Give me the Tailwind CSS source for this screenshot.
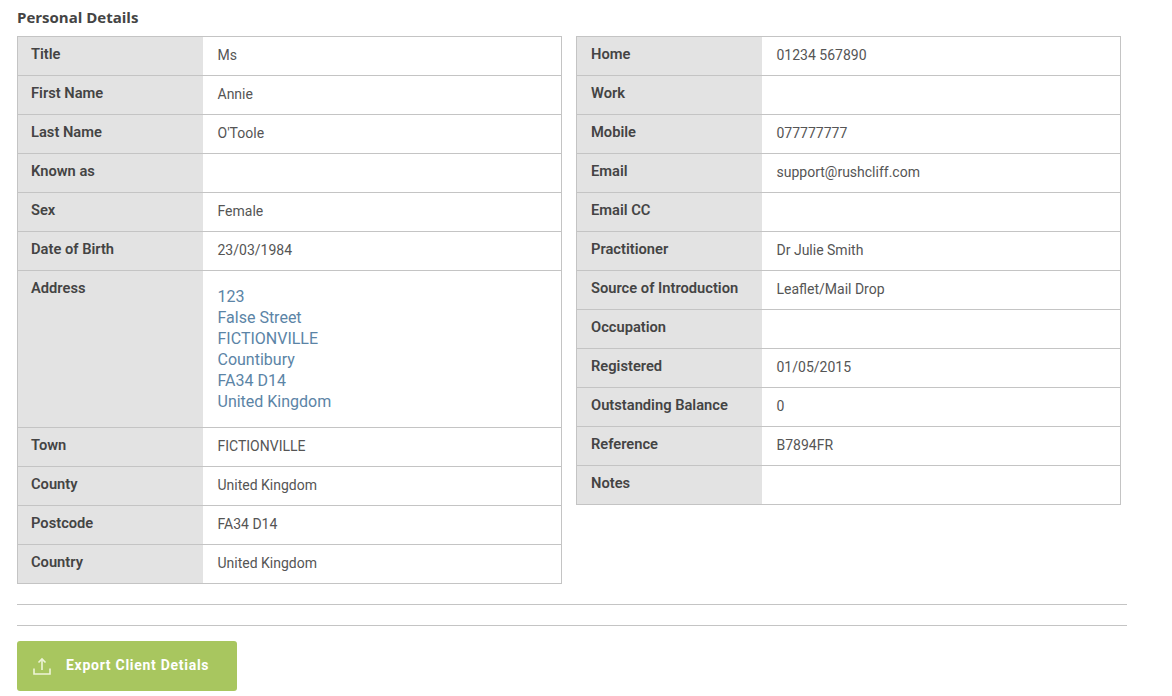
<!DOCTYPE html>
<html lang="en">
<head>
    <meta charset="UTF-8">
    <title>Personal Details</title>
    <script src="https://cdn.jsdelivr.net/npm/@tailwindcss/browser@4"></script>
</head>
<body class="bg-white font-['Roboto',sans-serif] text-[14px] text-[#555555]">
    <div class="w-[1110px] ml-[17px] pt-[7px]">
        <h2 class="font-['Open_Sans',sans-serif] font-bold text-[15px] leading-[20px] text-[#444444] mb-[9px]">Personal Details</h2>

        <div class="flex items-start gap-[14px]">
            <!-- left table -->
            <div class="w-[545px] border-t border-x border-[#c4c4c4]">
                <div class="flex h-[39px] border-b border-[#c4c4c4]">
                    <div class="w-[185px] bg-[#e3e3e3] pl-[13px] pt-[7px] leading-[20px] text-[14.7px] font-semibold text-[#444444]">Title</div>
                    <div class="pl-[14.500px] pt-[8px] leading-[20px]">Ms</div>
                </div>
                <div class="flex h-[39px] border-b border-[#c4c4c4]">
                    <div class="w-[185px] bg-[#e3e3e3] pl-[13px] pt-[7px] leading-[20px] text-[14.7px] font-semibold text-[#444444]">First Name</div>
                    <div class="pl-[14.500px] pt-[8px] leading-[20px]">Annie</div>
                </div>
                <div class="flex h-[39px] border-b border-[#c4c4c4]">
                    <div class="w-[185px] bg-[#e3e3e3] pl-[13px] pt-[7px] leading-[20px] text-[14.7px] font-semibold text-[#444444]">Last Name</div>
                    <div class="pl-[14.500px] pt-[8px] leading-[20px]">O'Toole</div>
                </div>
                <div class="flex h-[39px] border-b border-[#c4c4c4]">
                    <div class="w-[185px] bg-[#e3e3e3] pl-[13px] pt-[7px] leading-[20px] text-[14.7px] font-semibold text-[#444444]">Known as</div>
                    <div class="pl-[14.500px] pt-[8px] leading-[20px]"></div>
                </div>
                <div class="flex h-[39px] border-b border-[#c4c4c4]">
                    <div class="w-[185px] bg-[#e3e3e3] pl-[13px] pt-[7px] leading-[20px] text-[14.7px] font-semibold text-[#444444]">Sex</div>
                    <div class="pl-[14.500px] pt-[8px] leading-[20px]">Female</div>
                </div>
                <div class="flex h-[39px] border-b border-[#c4c4c4]">
                    <div class="w-[185px] bg-[#e3e3e3] pl-[13px] pt-[7px] leading-[20px] text-[14.7px] font-semibold text-[#444444]">Date of Birth</div>
                    <div class="pl-[14.500px] pt-[8px] leading-[20px]">23/03/1984</div>
                </div>
                <div class="flex h-[157px] border-b border-[#c4c4c4]">
                    <div class="w-[185px] bg-[#e3e3e3] pl-[13px] pt-[7px] leading-[20px] text-[14.7px] font-semibold text-[#444444]">Address</div>
                    <div class="pl-[14.500px] pt-[15px] text-[16px] leading-[21px] text-[#5b84a6]">
                        123<br>False Street<br>FICTIONVILLE<br>Countibury<br>FA34 D14<br>United Kingdom
                    </div>
                </div>
                <div class="flex h-[39px] border-b border-[#c4c4c4]">
                    <div class="w-[185px] bg-[#e3e3e3] pl-[13px] pt-[7px] leading-[20px] text-[14.7px] font-semibold text-[#444444]">Town</div>
                    <div class="pl-[14.500px] pt-[8px] leading-[20px]">FICTIONVILLE</div>
                </div>
                <div class="flex h-[39px] border-b border-[#c4c4c4]">
                    <div class="w-[185px] bg-[#e3e3e3] pl-[13px] pt-[7px] leading-[20px] text-[14.7px] font-semibold text-[#444444]">County</div>
                    <div class="pl-[14.500px] pt-[8px] leading-[20px]">United Kingdom</div>
                </div>
                <div class="flex h-[39px] border-b border-[#c4c4c4]">
                    <div class="w-[185px] bg-[#e3e3e3] pl-[13px] pt-[7px] leading-[20px] text-[14.7px] font-semibold text-[#444444]">Postcode</div>
                    <div class="pl-[14.500px] pt-[8px] leading-[20px]">FA34 D14</div>
                </div>
                <div class="flex h-[39px] border-b border-[#c4c4c4]">
                    <div class="w-[185px] bg-[#e3e3e3] pl-[13px] pt-[7px] leading-[20px] text-[14.7px] font-semibold text-[#444444]">Country</div>
                    <div class="pl-[14.500px] pt-[8px] leading-[20px]">United Kingdom</div>
                </div>
            </div>

            <!-- right table -->
            <div class="w-[545px] border-t border-x border-[#c4c4c4]">
                <div class="flex h-[39px] border-b border-[#c4c4c4]">
                    <div class="w-[185px] bg-[#e3e3e3] pl-[14px] pt-[7px] leading-[20px] text-[14.7px] font-semibold text-[#444444]">Home</div>
                    <div class="pl-[14.500px] pt-[8px] leading-[20px]">01234 567890</div>
                </div>
                <div class="flex h-[39px] border-b border-[#c4c4c4]">
                    <div class="w-[185px] bg-[#e3e3e3] pl-[14px] pt-[7px] leading-[20px] text-[14.7px] font-semibold text-[#444444]">Work</div>
                    <div class="pl-[14.500px] pt-[8px] leading-[20px]"></div>
                </div>
                <div class="flex h-[39px] border-b border-[#c4c4c4]">
                    <div class="w-[185px] bg-[#e3e3e3] pl-[14px] pt-[7px] leading-[20px] text-[14.7px] font-semibold text-[#444444]">Mobile</div>
                    <div class="pl-[14.500px] pt-[8px] leading-[20px]">077777777</div>
                </div>
                <div class="flex h-[39px] border-b border-[#c4c4c4]">
                    <div class="w-[185px] bg-[#e3e3e3] pl-[14px] pt-[7px] leading-[20px] text-[14.7px] font-semibold text-[#444444]">Email</div>
                    <div class="pl-[14.500px] pt-[8px] leading-[20px]">support@rushcliff.com</div>
                </div>
                <div class="flex h-[39px] border-b border-[#c4c4c4]">
                    <div class="w-[185px] bg-[#e3e3e3] pl-[14px] pt-[7px] leading-[20px] text-[14.7px] font-semibold text-[#444444]">Email CC</div>
                    <div class="pl-[14.500px] pt-[8px] leading-[20px]"></div>
                </div>
                <div class="flex h-[39px] border-b border-[#c4c4c4]">
                    <div class="w-[185px] bg-[#e3e3e3] pl-[14px] pt-[7px] leading-[20px] text-[14.7px] font-semibold text-[#444444]">Practitioner</div>
                    <div class="pl-[14.500px] pt-[8px] leading-[20px]">Dr Julie Smith</div>
                </div>
                <div class="flex h-[39px] border-b border-[#c4c4c4]">
                    <div class="w-[185px] bg-[#e3e3e3] pl-[14px] pt-[7px] leading-[20px] text-[14.7px] font-semibold text-[#444444]">Source of Introduction</div>
                    <div class="pl-[14.500px] pt-[8px] leading-[20px]">Leaflet/Mail Drop</div>
                </div>
                <div class="flex h-[39px] border-b border-[#c4c4c4]">
                    <div class="w-[185px] bg-[#e3e3e3] pl-[14px] pt-[7px] leading-[20px] text-[14.7px] font-semibold text-[#444444]">Occupation</div>
                    <div class="pl-[14.500px] pt-[8px] leading-[20px]"></div>
                </div>
                <div class="flex h-[39px] border-b border-[#c4c4c4]">
                    <div class="w-[185px] bg-[#e3e3e3] pl-[14px] pt-[7px] leading-[20px] text-[14.7px] font-semibold text-[#444444]">Registered</div>
                    <div class="pl-[14.500px] pt-[8px] leading-[20px]">01/05/2015</div>
                </div>
                <div class="flex h-[39px] border-b border-[#c4c4c4]">
                    <div class="w-[185px] bg-[#e3e3e3] pl-[14px] pt-[7px] leading-[20px] text-[14.7px] font-semibold text-[#444444]">Outstanding Balance</div>
                    <div class="pl-[14.500px] pt-[8px] leading-[20px]">0</div>
                </div>
                <div class="flex h-[39px] border-b border-[#c4c4c4]">
                    <div class="w-[185px] bg-[#e3e3e3] pl-[14px] pt-[7px] leading-[20px] text-[14.7px] font-semibold text-[#444444]">Reference</div>
                    <div class="pl-[14.500px] pt-[8px] leading-[20px]">B7894FR</div>
                </div>
                <div class="flex h-[39px] border-b border-[#c4c4c4]">
                    <div class="w-[185px] bg-[#e3e3e3] pl-[14px] pt-[7px] leading-[20px] text-[14.7px] font-semibold text-[#444444]">Notes</div>
                    <div class="pl-[14.500px] pt-[8px] leading-[20px]"></div>
                </div>
            </div>
        </div>

        <hr class="mt-[20px] border-t border-[#c4c4c4]">
        <hr class="mt-[20px] border-t border-[#c4c4c4]">

        <button class="mt-[15px] w-[220px] h-[50px] flex items-center rounded-[3px] bg-[#a8c65f] pl-[15px] pb-[2px] text-white font-bold tracking-[0.72px]">
            <svg class="w-[20px] h-[20px] mr-[14px] mt-[2px]" viewBox="0 0 20 20" fill="none" stroke="#eef4d8" stroke-width="1.6">
                <path d="M2 12.5v5.5h16v-5.500"/>
                <path d="M10 14V3"/>
                <path d="M6.5 6.5L10 3l3.500 3.500"/>
            </svg>
            Export Client Detials
        </button>
    </div>
</body>
</html>
